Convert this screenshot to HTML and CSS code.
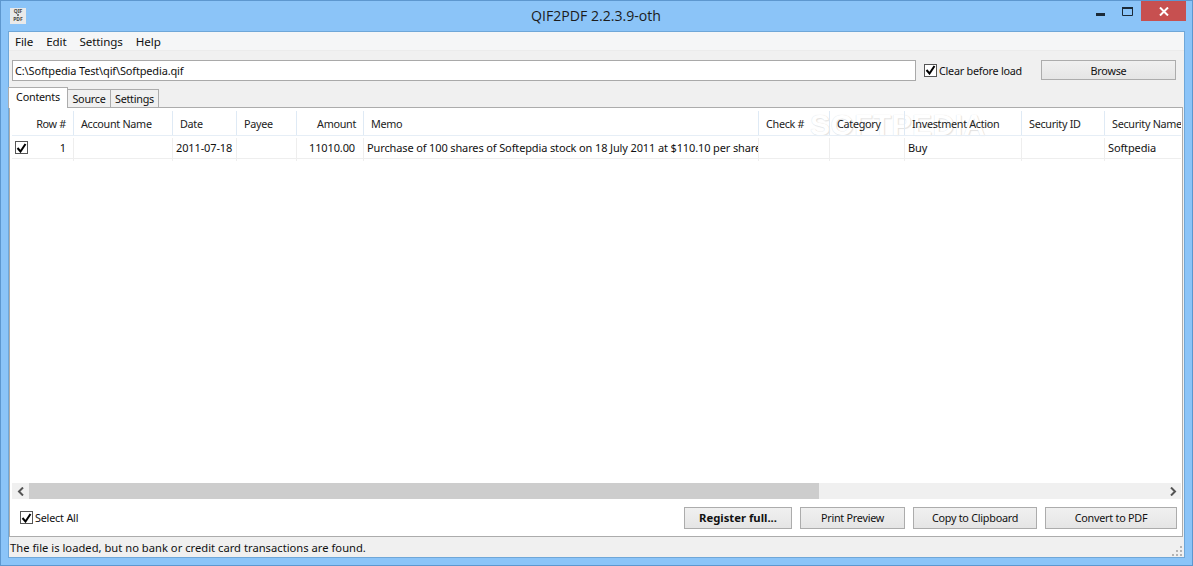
FILE: index.html
```html
<!DOCTYPE html>
<html lang="en">
<head>
<meta charset="utf-8">
<title>QIF2PDF</title>
<link rel="stylesheet" href="styles.css">
</head>
<body>
<div class="window">
  <header class="titlebar">
    <div class="appicon"><span>QIF</span><i></i><span>PDF</span></div>
    <div class="title">QIF2PDF 2.2.3.9-oth</div>
    <div class="controls">
      <div class="ctl"><svg width="9" height="9" viewBox="0 0 9 9"><rect x="0" y="6" width="9" height="3" fill="#1b2a38"/></svg></div>
      <div class="ctl"><svg width="11" height="9" viewBox="0 0 11 9"><path d="M.5.5h10v8H.5z" fill="none" stroke="#1b2a38"/><rect x="0" y="0" width="11" height="2" fill="#1b2a38"/></svg></div>
      <div class="close"><svg width="10" height="9" viewBox="0 0 10 9"><path d="M1 .5l8 8M9 .5l-8 8" stroke="#fff" stroke-width="2" fill="none"/></svg></div>
    </div>
  </header>
  <main class="client">
    <nav class="menu">
      <span>File</span><span>Edit</span><span>Settings</span><span>Help</span>
    </nav>
    <div class="toolbar">
      <div class="path">C:\Softpedia Test\qif\Softpedia.qif</div>
      <label class="check top-check"><span class="box"><svg width="11" height="10" viewBox="0 0 11 10"><path d="M1.5 5l3 3.5L9.5 1" fill="none" stroke="#000" stroke-width="2"/></svg></span>Clear before load</label>
      <div class="btn browse">Browse</div>
    </div>
    <div class="tabs">
      <div class="tab active">Contents</div>
      <div class="tab">Source</div>
      <div class="tab">Settings</div>
    </div>
    <section class="panel">
      <div class="tablearea">
        <div class="row head">
          <div class="c w1 r">Row #</div><div class="c w2">Account Name</div><div class="c w3">Date</div><div class="c w4">Payee</div><div class="c w5 r">Amount</div><div class="c w6">Memo</div><div class="c w7">Check #</div><div class="c w8">Category</div><div class="c w9">Investment Action</div><div class="c w10">Security ID</div><div class="c w11">Security Name</div>
        </div>
        <div class="row body">
          <div class="c w1 r rowno"><span class="box small"><svg width="11" height="10" viewBox="0 0 11 10"><path d="M1.5 5l3 3.5L9.5 1" fill="none" stroke="#000" stroke-width="2"/></svg></span>1</div><div class="c w2"></div><div class="c w3">2011-07-18</div><div class="c w4"></div><div class="c w5 r amount">11010.00</div><div class="c w6">Purchase of 100 shares of Softepdia stock on 18 July 2011 at $110.10 per share</div><div class="c w7"></div><div class="c w8"></div><div class="c w9">Buy</div><div class="c w10"></div><div class="c w11">Softpedia</div>
        </div>
        <div class="watermark">SOFTPEDIA<sup>®</sup></div>
      </div>
      <div class="hscroll">
        <div class="arrow"><svg width="8" height="9" viewBox="0 0 8 9"><path d="M6 .5L2 4.5l4 4" fill="none" stroke="#555" stroke-width="2"/></svg></div>
        <div class="track"><div class="thumb"></div></div>
        <div class="arrow"><svg width="8" height="9" viewBox="0 0 8 9"><path d="M2 .5l4 4-4 4" fill="none" stroke="#555" stroke-width="2"/></svg></div>
      </div>
      <div class="actions">
        <label class="check"><span class="box"><svg width="11" height="10" viewBox="0 0 11 10"><path d="M1.5 5l3 3.5L9.5 1" fill="none" stroke="#000" stroke-width="2"/></svg></span>Select All</label>
        <div class="btn register">Register full...</div>
        <div class="btn preview">Print Preview</div>
        <div class="btn clip">Copy to Clipboard</div>
        <div class="btn pdf">Convert to PDF</div>
      </div>
    </section>
    <footer class="status">
      <span>The file is loaded, but no bank or credit card transactions are found.</span>
      <svg class="grip" width="10" height="10" viewBox="0 0 10 10" fill="#b4b4b4"><rect x="8" y="0" width="2" height="2"/><rect x="4" y="4" width="2" height="2"/><rect x="8" y="4" width="2" height="2"/><rect x="0" y="8" width="2" height="2"/><rect x="4" y="8" width="2" height="2"/><rect x="8" y="8" width="2" height="2"/></svg>
    </footer>
  </main>
</div>
</body>
</html>
```
FILE: styles.css
```css
* { box-sizing: border-box; }
html, body { margin: 0; padding: 0; }
body {
  width: 1193px; height: 566px; overflow: hidden;
  font-family: "Noto Sans", "DejaVu Sans", sans-serif;
  font-size: 10.8px; letter-spacing: -0.25px; color: #111;
}
.window {
  width: 1193px; height: 566px;
  background: #8bc4f8;
  border: 1px solid #5d97cf;
  display: flex; flex-direction: column;
  padding: 0 7px 7px 7px;
}
.titlebar { height: 30px; display: flex; align-items: flex-start; flex: none; }
.appicon {
  width: 16px; height: 16px; margin: 7px 79px 0 2px; background: #e9e9e9;
  font-size: 5px; line-height: 6px; font-weight: 700; color: #444; text-align: center; letter-spacing: 0;
  display: flex; flex-direction: column; align-items: center; overflow: hidden; flex: none;
}
.appicon i { display: block; width: 2px; height: 2px; background: #777; flex: none; }
.appicon span { display: block; height: 6px; flex: none; }
.title {
  flex: 1; text-align: center; font-size: 14.1px; line-height: 29px; color: #1c1c1c; letter-spacing: 0;
  font-family: "Open Sans", "Noto Sans", sans-serif;
}
.controls { display: flex; align-items: flex-start; margin-right: -1px; }
.ctl { width: 27px; height: 20px; display: flex; align-items: center; justify-content: center; }
.close { width: 45px; height: 20px; background: #c75050; display: flex; align-items: center; justify-content: center; }
.client {
  flex: 1; min-height: 0; background: #f0f0f0;
  display: flex; flex-direction: column;
  border: 1px solid #6fa7d8;
}
.menu { height: 18px; background: #f5f6f7; display: flex; gap: 13px; padding: 0 0 0 6px; align-items: center; font-size: 11.6px; letter-spacing: -0.1px; flex: none; }
.toolbar { height: 37px; display: flex; align-items: center; flex: none; padding: 2px 0 0 3px; border-top: 1px solid #ebebeb; }
.path {
  width: 904px; height: 21px; background: #fff; border: 1px solid #a9a9a9;
  line-height: 19px; padding-left: 2px; font-size: 11px; letter-spacing: -0.16px;
}
.check { display: flex; align-items: center; gap: 2px; }
.box { width: 13px; height: 13px; border: 1px solid #555; background: #fff; display: inline-flex; align-items: center; justify-content: center; flex: none; }
.top-check { margin-left: 8px; width: 117px; }
.btn {
  height: 22px; border: 1px solid #acacac; display: flex; align-items: center; justify-content: center;
  background: linear-gradient(#f0f0f0, #e5e5e5); flex: none;
}
.browse { width: 135px; height: 20px; }
.tabs { display: flex; height: 20px; flex: none; align-items: flex-end; margin-left: -1px; }
.tab { height: 18px; border: 1px solid #acacac; border-bottom: none; padding: 0 3px; line-height: 17px; background: #f0f0f0; text-align: center; }
.tab:nth-child(2) { width: 44px; }
.tab:nth-child(3) { width: 49px; margin-left: -1px; }
.tab.active { height: 21px; width: 60px; background: #fff; margin-bottom: -1px; margin-right: -1px; line-height: 17px; position: relative; z-index: 1; }
.panel {
  flex: 1; min-height: 0; background: #fff;
  border: 1px solid #acacac; margin-right: 1px;
  display: flex; flex-direction: column; padding: 3px 1px 0 2px;
}
.tablearea { flex: 1; position: relative; overflow: hidden; isolation: isolate; }
.row { display: flex; }
.head { height: 25px; border-bottom: 1px solid #e6eef6; margin-bottom: 2px; color: #222; letter-spacing: -0.3px; }
.head .c { border-right: 1px solid #dfeaf5; padding: 0 7px; line-height: 26px; }
.body { height: 21px; border-bottom: 1px solid #eeeeee; font-size: 11px; letter-spacing: -0.13px; }
.body .c { border-right: 1px solid #eeeeee; padding: 0 3px; line-height: 20px; height: 23px; }
.c { flex: none; white-space: nowrap; overflow: hidden; }
.r { text-align: right; }
.rowno { position: relative; padding-right: 7px !important; }
.body .amount { padding-right: 8px; }
.small { position: absolute; left: 3px; top: 3px; }
.w1 { width: 62px; } .w2 { width: 99px; } .w3 { width: 64px; } .w4 { width: 60px; }
.w5 { width: 67px; } .w6 { width: 395px; } .w7 { width: 71px; } .w8 { width: 75px; }
.w9 { width: 117px; } .w10 { width: 83px; } .w11 { width: 77px; border-right: none !important; }
.watermark {
  position: absolute; left: 798px; top: 0; font-size: 30px; font-weight: 700; color: #fff; line-height: 28px; letter-spacing: 0.4px; white-space: nowrap;
  font-family: "Liberation Sans", sans-serif; z-index: -1; text-shadow: 0 0 1px #d8d8d8, 1px 1px 1px #e4e4e4;
}
.watermark sup { font-size: 8px; vertical-align: top; font-weight: 400; color: #ddd; text-shadow: none; }
.hscroll { height: 16px; background: #f0f0f0; display: flex; flex: none; }
.arrow { width: 17px; display: flex; align-items: center; justify-content: center; flex: none; }
.track { flex: 1; }
.thumb { width: 790px; height: 100%; background: #cdcdcd; }
.actions { height: 37px; display: flex; align-items: center; flex: none; padding-left: 8px; }
.actions .check { width: 664px; letter-spacing: -0.2px; }
.register { width: 108px; font-weight: 700; font-size: 11.3px; letter-spacing: 0; }
.preview { width: 105px; margin-left: 8px; }
.clip { width: 124px; margin-left: 8px; }
.pdf { width: 132px; margin-left: 8px; }
.status { height: 20px; flex: none; display: flex; align-items: center; justify-content: space-between; padding: 0 2px 0 1px; font-size: 11.2px; letter-spacing: 0.01px; }
.grip { align-self: flex-end; margin-bottom: 1px; }
```
